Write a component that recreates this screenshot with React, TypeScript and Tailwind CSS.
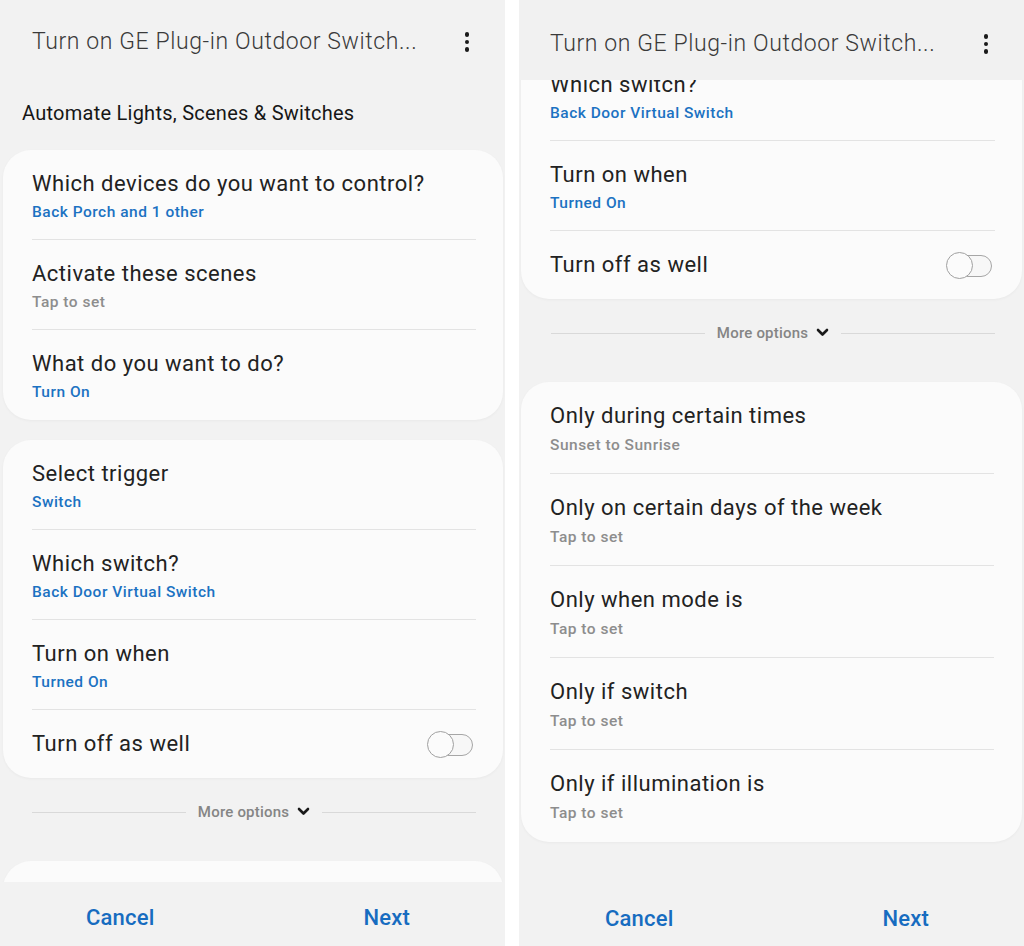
import React from "react";

const BLUE = "text-[#1b72c2]";
const GRAY = "text-[#8d8d8d]";

function Kebab() {
  return (
    <div className="flex flex-col items-center gap-[3px]">
      <span className="block w-[4.5px] h-[4.5px] rounded-full bg-[#1a1a1a]" />
      <span className="block w-[4.5px] h-[4.5px] rounded-full bg-[#1a1a1a]" />
      <span className="block w-[4.5px] h-[4.5px] rounded-full bg-[#1a1a1a]" />
    </div>
  );
}

function Header() {
  return (
    <div className="h-[84px] shrink-0 flex items-center pl-[32px] pr-[36px] bg-[#f2f2f2]">
      <div className="flex-1 text-[23px] leading-[28px] font-light text-[#3a3a3a] tracking-[0.6px] whitespace-nowrap">
        Turn on GE Plug-in Outdoor Switch...
      </div>
      <Kebab />
    </div>
  );
}

function Toggle() {
  return (
    <div className="relative w-[46px] h-[27px] flex items-center">
      <div className="absolute left-[2px] right-0 top-[3px] h-[22px] rounded-full border-[1.5px] border-[#a6a6a6] bg-[#f7f7f7]" />
      <div className="absolute left-0 top-0 w-[27px] h-[27px] rounded-full border-[1.5px] border-[#a0a0a0] bg-[#fbfbfb]" />
    </div>
  );
}

type RowProps = {
  title: string;
  sub?: string;
  tone?: "blue" | "gray";
  last?: boolean;
  tall?: boolean;
};

function Row({ title, sub, tone = "blue", last, tall }: RowProps) {
  return (
    <div
      className={`${tall ? "h-[92px]" : "h-[90px]"} pt-[20px] ${
        last ? "" : "border-b border-[#e3e3e3]"
      }`}
    >
      <div className="text-[22px] leading-[28px] tracking-[0.5px] text-[#222222] whitespace-nowrap">{title}</div>
      {sub && (
        <div
          className={`${tall ? "mt-[5px]" : "mt-[4px]"} text-[15.5px] leading-[20px] tracking-[0.5px] font-medium ${
            tone === "blue" ? BLUE : GRAY
          }`}
        >
          {sub}
        </div>
      )}
    </div>
  );
}

function ToggleRow() {
  return (
    <div className="h-[68px] flex items-center justify-between">
      <div className="text-[22px] leading-[28px] tracking-[0.5px] text-[#222222]">Turn off as well</div>
      <div className="mr-[3px]">
        <Toggle />
      </div>
    </div>
  );
}

function Card({ children, className = "" }: { children: React.ReactNode; className?: string }) {
  return (
    <div
      className={`shrink-0 bg-[#fbfbfb] rounded-[28px] pl-[29px] pr-[27px] shadow-[0_1px_3px_rgba(0,0,0,0.04)] ${className}`}
    >
      {children}
    </div>
  );
}

function MoreOptions() {
  return (
    <div className="h-[83px] shrink-0 pt-[24px] pl-[32px] pr-[29px]">
      <div className="h-[20px] flex items-center">
        <div className="flex-1 h-px bg-[#d9d9d9]" />
        <div className="flex items-center px-[12px] gap-[8px]">
          <span className="text-[15px] leading-[20px] tracking-[0.2px] font-medium text-[#858585]">More options</span>
          <svg width="13" height="9" viewBox="0 0 13 9" className="mt-[-2px]">
            <path d="M2 2 L6.5 6.5 L11 2" fill="none" stroke="#1a1a1a" strokeWidth="2.6" strokeLinecap="round" strokeLinejoin="round" />
          </svg>
        </div>
        <div className="flex-1 h-px bg-[#d9d9d9]" />
      </div>
    </div>
  );
}

function BottomBar({ right }: { right?: boolean }) {
  return (
    <div
      className={`h-[64px] shrink-0 bg-[#f2f2f2] flex items-center ${
        right ? "pt-[10px]" : "pt-[7px]"
      } pl-[86px] pr-[95px]`}
    >
      <span className="text-[22px] leading-[28px] tracking-[0.2px] font-medium text-[#176cc0]">Cancel</span>
      <span className="ml-auto text-[22px] leading-[28px] tracking-[0.2px] font-medium text-[#176cc0]">Next</span>
    </div>
  );
}

function LeftPanel() {
  return (
    <div className="w-[505px] h-full flex flex-col bg-[#f2f2f2]">
      <div className="flex-1 min-h-0 overflow-hidden flex flex-col">
        <Header />
        <div className="h-[66px] shrink-0 pt-[17px] pl-[22px] text-[20px] leading-[24px] tracking-[0.25px] text-[#161616]">
          Automate Lights, Scenes &amp; Switches
        </div>
        <Card className="ml-[3px] mr-[2px]">
          <Row title="Which devices do you want to control?" sub="Back Porch and 1 other" />
          <Row title="Activate these scenes" sub="Tap to set" tone="gray" />
          <Row title="What do you want to do?" sub="Turn On" last />
        </Card>
        <Card className="ml-[3px] mr-[2px] mt-[20px]">
          <Row title="Select trigger" sub="Switch" />
          <Row title="Which switch?" sub="Back Door Virtual Switch" />
          <Row title="Turn on when" sub="Turned On" />
          <ToggleRow />
        </Card>
        <MoreOptions />
        <Card className="ml-[3px] mr-[2px] h-[120px]">
          <div />
        </Card>
      </div>
      <BottomBar />
    </div>
  );
}

function RightPanel() {
  return (
    <div className="w-[505px] h-full flex flex-col bg-[#f2f2f2]">
      <div className="flex-1 min-h-0 overflow-hidden flex flex-col">
        <div className="h-[80px] shrink-0 flex items-center pt-[8px] pl-[31px] pr-[36px] bg-[#f1f1f1] relative z-10">
          <div className="flex-1 text-[23px] leading-[28px] font-light text-[#3a3a3a] tracking-[0.6px] whitespace-nowrap">
            Turn on GE Plug-in Outdoor Switch...
          </div>
          <Kebab />
        </div>
        <div className="flex-1 min-h-0 overflow-hidden flex flex-col">
          <Card className="ml-[2px] mr-[2px] mt-[-29px] rounded-t-none">
            <Row title="Which switch?" sub="Back Door Virtual Switch" />
            <Row title="Turn on when" sub="Turned On" />
            <ToggleRow />
          </Card>
          <MoreOptions />
          <Card className="ml-[2px] mr-[2px] pr-[28px]">
            <Row tall title="Only during certain times" sub="Sunset to Sunrise" tone="gray" />
            <Row tall title="Only on certain days of the week" sub="Tap to set" tone="gray" />
            <Row tall title="Only when mode is" sub="Tap to set" tone="gray" />
            <Row tall title="Only if switch" sub="Tap to set" tone="gray" />
            <Row tall title="Only if illumination is" sub="Tap to set" tone="gray" last />
          </Card>
        </div>
      </div>
      <BottomBar right />
    </div>
  );
}

export default function App() {
  return (
    <div
      className="w-[1024px] h-[946px] flex bg-white overflow-hidden"
      style={{ fontFamily: "Roboto, 'Noto Sans', 'Liberation Sans', sans-serif" }}
    >
      <LeftPanel />
      <div className="w-[14px] h-full bg-white" />
      <RightPanel />
    </div>
  );
}
